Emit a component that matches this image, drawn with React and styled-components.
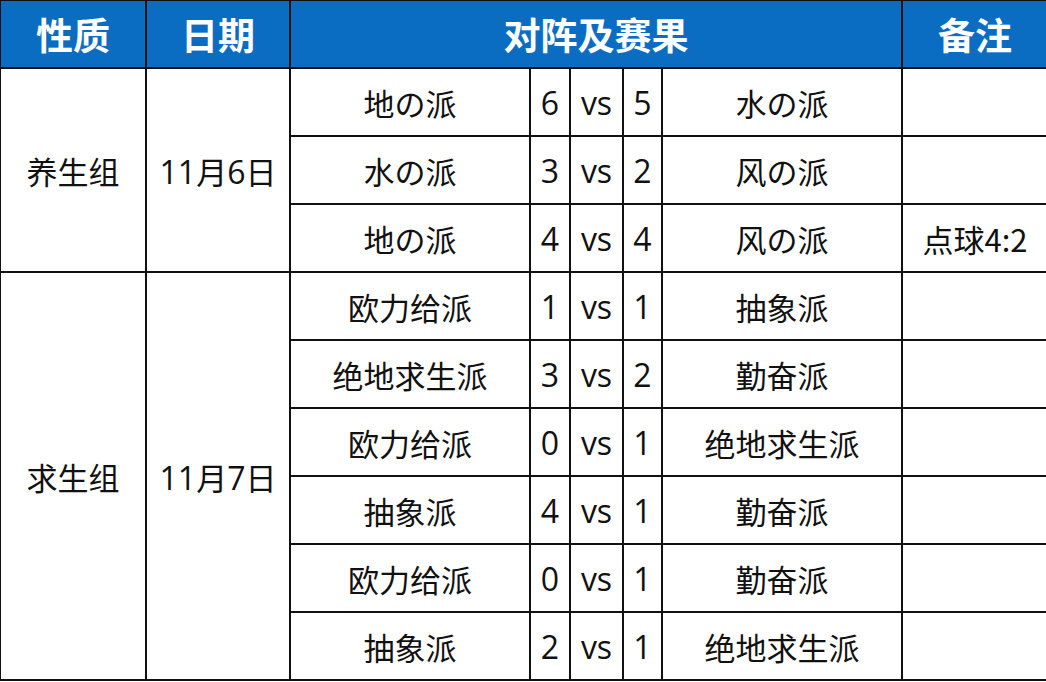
import React from 'react';
import styled, { createGlobalStyle } from 'styled-components';

const Global = createGlobalStyle`
  body {
    margin: 0;
    background: #fff;
    font-family: "Noto Sans", "Noto Sans CJK SC", sans-serif;
  }
`;

const Table = styled.table`
  border-collapse: collapse;
  table-layout: fixed;
  width: 1048px;
  margin-left: -1px;
  margin-top: -1px;
`;

const Col = styled.col`
  width: ${(p) => p.$w}px;
`;

const HeadCell = styled.th`
  background: #0b6dc2;
  color: #fff;
  height: 66px;
  padding: 0;
  border: 2px solid #111;
  font-size: 37px;
  font-weight: 700;
  font-family: "Noto Sans CJK SC", sans-serif;
  text-align: center;
  vertical-align: middle;
`;

const Cell = styled.td`
  height: 66px;
  padding: 0;
  border: 2px solid #111;
  color: #111;
  font-size: ${(p) => (p.$num ? '32px' : '31px')};
  font-family: ${(p) =>
    p.$num ? '"Open Sans", "Noto Sans", sans-serif' : '"Noto Sans CJK SC", sans-serif'};
  font-weight: 400;
  text-align: center;
  vertical-align: middle;
  white-space: nowrap;
  overflow: hidden;
`;

const Digits = styled.span`
  font-family: "Open Sans", "Noto Sans", sans-serif;
  font-size: 32px;
`;

const widths = [146, 144, 240, 40, 53, 39, 240, 146];

const groups = [
  {
    kind: '养生组',
    day: '6',
    games: [
      ['地の派', '6', '5', '水の派', ''],
      ['水の派', '3', '2', '风の派', ''],
      ['地の派', '4', '4', '风の派', '点球4:2'],
    ],
  },
  {
    kind: '求生组',
    day: '7',
    games: [
      ['欧力给派', '1', '1', '抽象派', ''],
      ['绝地求生派', '3', '2', '勤奋派', ''],
      ['欧力给派', '0', '1', '绝地求生派', ''],
      ['抽象派', '4', '1', '勤奋派', ''],
      ['欧力给派', '0', '1', '勤奋派', ''],
      ['抽象派', '2', '1', '绝地求生派', ''],
    ],
  },
];

export default function App() {
  return (
    <>
      <Global />
      <Table>
        <colgroup>
          {widths.map((w, i) => (
            <Col key={i} $w={w} />
          ))}
        </colgroup>
        <thead>
          <tr>
            <HeadCell>性质</HeadCell>
            <HeadCell>日期</HeadCell>
            <HeadCell colSpan={5}>对阵及赛果</HeadCell>
            <HeadCell>备注</HeadCell>
          </tr>
        </thead>
        <tbody>
          {groups.map((g) =>
            g.games.map((row, i) => (
              <tr key={g.kind + i}>
                {i === 0 && <Cell rowSpan={g.games.length}>{g.kind}</Cell>}
                {i === 0 && (
                  <Cell rowSpan={g.games.length}>
                    <Digits>11</Digits>月<Digits>{g.day}</Digits>日
                  </Cell>
                )}
                <Cell>{row[0]}</Cell>
                <Cell $num>{row[1]}</Cell>
                <Cell $num>vs</Cell>
                <Cell $num>{row[2]}</Cell>
                <Cell>{row[3]}</Cell>
                <Cell>{row[4]}</Cell>
              </tr>
            ))
          )}
        </tbody>
      </Table>
    </>
  );
}
